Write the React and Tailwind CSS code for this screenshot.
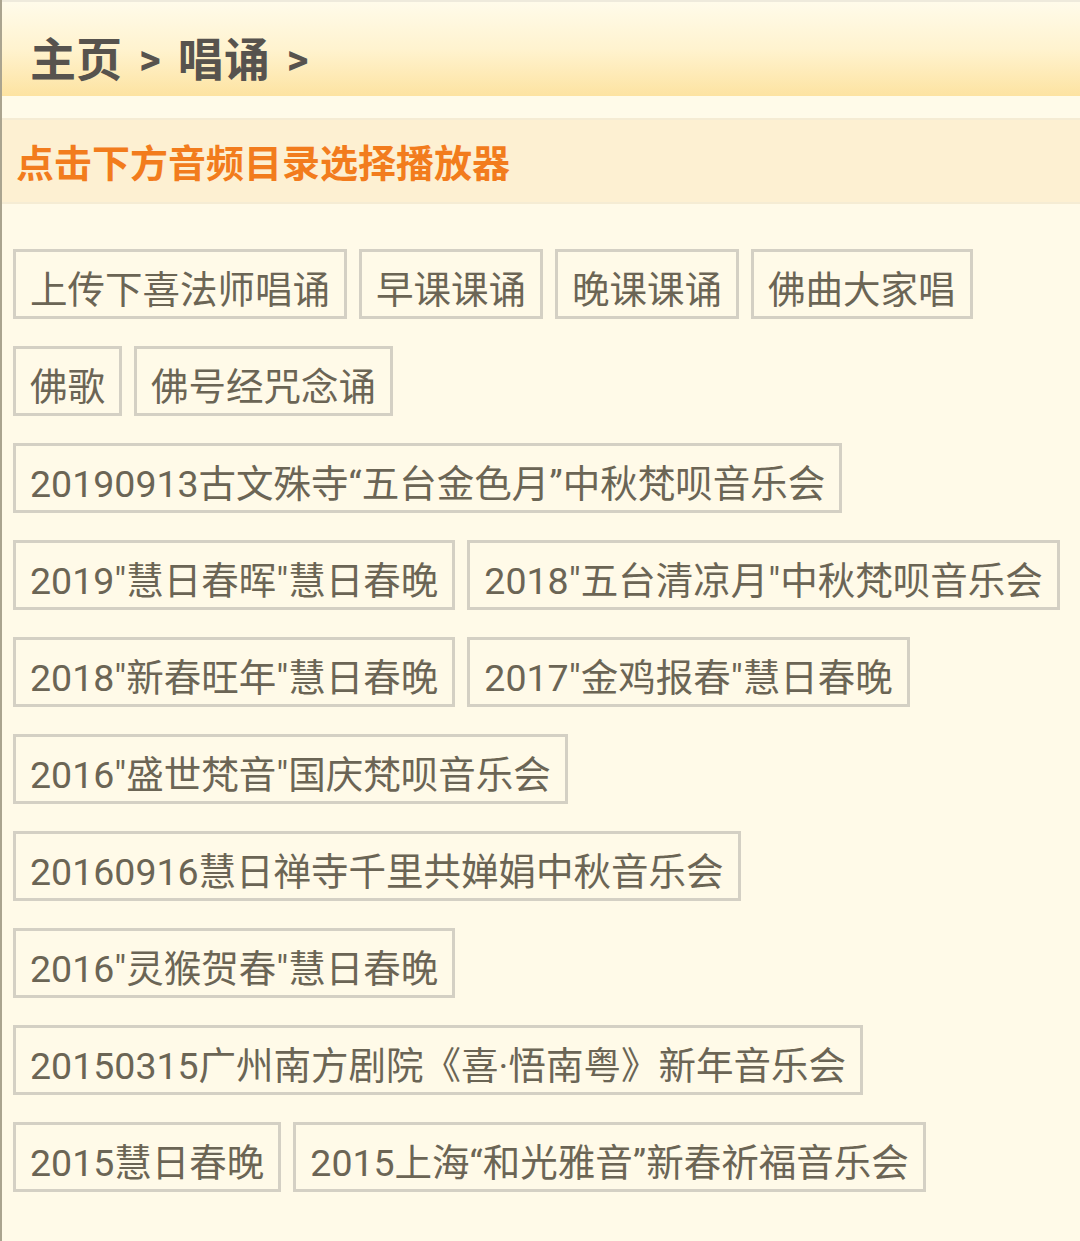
const items = [
  ['上传下喜法师唱诵', '早课课诵', '晚课课诵', '佛曲大家唱'],
  ['佛歌', '佛号经咒念诵'],
  ['20190913古文殊寺“五台金色月”中秋梵呗音乐会'],
  ['2019"慧日春晖"慧日春晚', '2018"五台清凉月"中秋梵呗音乐会'],
  ['2018"新春旺年"慧日春晚', '2017"金鸡报春"慧日春晚'],
  ['2016"盛世梵音"国庆梵呗音乐会'],
  ['20160916慧日禅寺千里共婵娟中秋音乐会'],
  ['2016"灵猴贺春"慧日春晚'],
  ['20150315广州南方剧院《喜·悟南粤》新年音乐会'],
  ['2015慧日春晚', '2015上海“和光雅音”新春祈福音乐会'],
]

const font = { fontFamily: 'Roboto, "Noto Sans CJK SC", sans-serif' }

export default function App() {
  return (
    <div className="min-h-[1241px] w-[1080px] bg-[#fffae8] border-l-2 border-[#aaa48f]" style={font}>
      <div className="h-[96px] flex items-center pt-[22px] pl-[28px] gap-[17px] bg-gradient-to-b from-[#fffbea] via-[#fff3cf] to-[#fde3a1] border-t-2 border-[#eeeadc] text-[#57534e] font-bold">
        <span className="text-[46px] leading-none">主页</span>
        <span className="text-[42px] leading-none">&gt;</span>
        <span className="text-[46px] leading-none">唱诵</span>
        <span className="text-[42px] leading-none">&gt;</span>
      </div>
      <div className="h-[22px] bg-[#fffbe9]" />
      <div className="h-[86px] flex items-center pl-[14px] bg-[#fdf0d2] border-y-2 border-[#f5ecd4]">
        <span className="text-[38px] font-bold text-[#f27c1d] leading-none" style={{ fontFamily: '"Noto Sans CJK SC", sans-serif' }}>点击下方音频目录选择播放器</span>
      </div>
      <div className="flex flex-col gap-[27px] px-[11px] pt-[45px] pb-[44px]">
        {items.map((row, i) => (
          <div key={i} className="flex gap-[12px]">
            {row.map(t => (
              <div key={t} className="h-[70px] flex items-center pt-[14px] px-[14px] border-[3px] border-[#d4d0c4] text-[37.5px] text-[#6b6555] leading-none whitespace-nowrap">
                {t}
              </div>
            ))}
          </div>
        ))}
      </div>
    </div>
  )
}
